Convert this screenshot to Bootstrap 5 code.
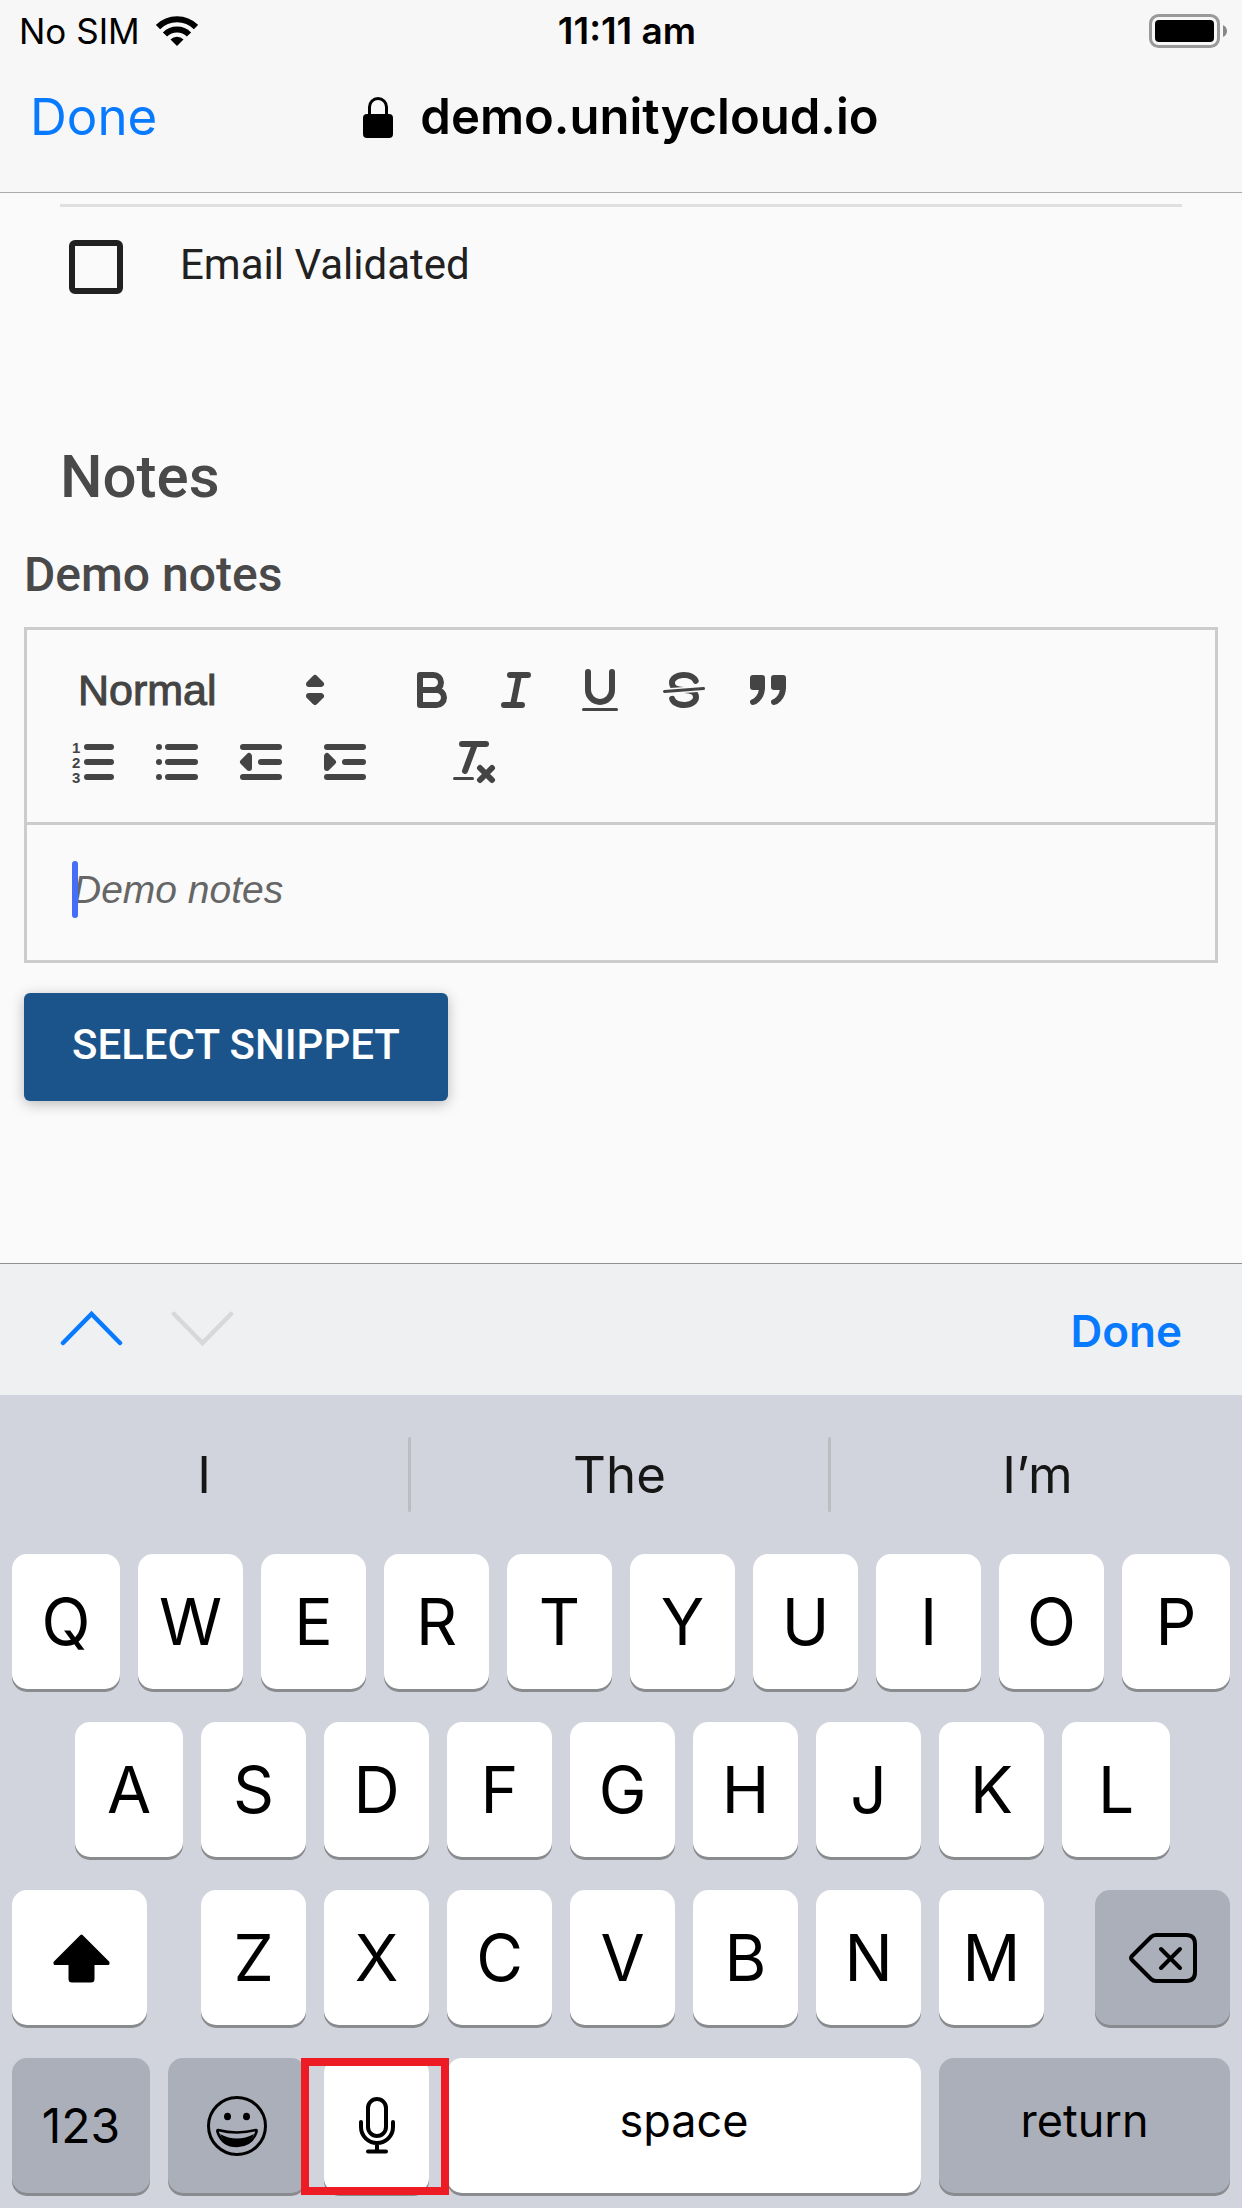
<!DOCTYPE html>
<html lang="en">
<head>
<meta charset="utf-8">
<meta name="viewport" content="width=device-width, initial-scale=1">
<title>Notes</title>
<link href="https://cdn.jsdelivr.net/npm/bootstrap@5.3.0/dist/css/bootstrap.min.css" rel="stylesheet">
<style>
  body { font-family: Roboto, sans-serif; background: #fafafa; color: #212121; line-height: 1.2; }
  button { font-family: inherit; }
  svg { display: block; }
  .ui-font { font-family: Inter, sans-serif; }

  /* browser header */
  .top-bar { background: #f7f7f7; border-bottom: 1px solid #aaa; color: #000; padding-bottom: 20px; }
  .three-col { display: grid; grid-template-columns: 1fr auto 1fr; align-items: center; }
  .status-row { height: 62px; padding: 0 15px 0 19px; font-size: 35px; }
  .status-row .clock { font-size: 37px; font-weight: 600; padding-left: 8px; }
  .title-row { height: 110px; padding: 0 30px; }
  .plain-btn { background: none; border: 0; padding: 0; color: #087aff; }
  .title-row .plain-btn { font-size: 51px; }
  .site-name { font-size: 49px; font-weight: 600; line-height: 60px; }
  .lock { margin-right: 27px; }

  /* form */
  .rule { height: 3px; background: #e0e0e0; margin: 11px 60px 0; }
  .check-row { height: 120px; padding: 0 69px; gap: 57px; font-size: 42px; }
  .check-row .form-check-input { width: 54px; height: 54px; border: 6px solid #212121; border-radius: 6px; background-color: transparent; margin: 0; float: none; }
  .check-row label { padding-bottom: 4px; }
  .section-title { font-size: 60px; font-weight: 500; line-height: 72px; color: #494949; margin: 114px 60px 0; }
  .field-title { font-size: 48px; font-weight: 500; line-height: 60px; color: #494949; margin: 32px 0 22px; display: block; }
  .editor { border: 3px solid #ccc; font-family: "Liberation Sans", sans-serif; }
  .tools { border-bottom: 3px solid #ccc; padding: 24px; color: #444; }
  .tool-group { margin-right: 45px; }
  .tool-btn { width: 84px; height: 72px; padding: 9px 15px; border: 0; background: none; color: inherit; }
  .tool-btn svg, .picker svg { width: 54px; height: 54px; }
  .picker { width: 294px; height: 72px; }
  .picker select { width: 100%; height: 100%; border: 0; background: none; appearance: none; color: inherit; font-size: 43px; padding: 2px 27px 0; -webkit-text-stroke: 1px #444; }
  .picker svg { right: 3px; top: 9px; pointer-events: none; }
  .ln { fill: none; stroke: currentColor; stroke-width: 2; stroke-linecap: round; stroke-linejoin: round; }
  .thin { stroke-width: 1; }
  .solid { fill: currentColor; }
  .nums { font: bold 5px "Liberation Sans", sans-serif; fill: currentColor; }
  .note-box { display: block; width: 100%; height: 135px; border: 0; resize: none; background: none; padding: 36px 46px; font-size: 39px; line-height: 57px; overflow: hidden; }
  .note-box::placeholder { color: #666; font-style: italic; opacity: 1; }
  .caret { left: 45px; top: 36px; width: 6px; height: 57px; border-radius: 3px; background: #466df6; }
  .snippet { background: #1b548b; color: #fff; font-size: 42px; font-weight: 500; line-height: 54px; padding: 25px 48px 29px; border: 0; border-radius: 6px; box-shadow: 0 3px 14px rgba(0,0,0,.26); margin: 30px 0 120px; }

  /* keyboard */
  .accessory { background: #eff0f2; border-top: 1px solid #8f9195; height: 132px; padding: 0 60px; }
  .accessory .chevrons { padding-bottom: 4px; }
  .accessory .done { font-size: 44px; font-weight: 600; padding-top: 4px; }
  .keyboard { background: #d1d4dc; padding: 0 12px 15px; color: #000; }
  .suggest { display: grid; grid-template-columns: 396fr 3px 417fr 3px 399fr; align-items: center; height: 159px; font-size: 51px; }
  .suggest button { border: 0; background: none; color: #161616; }
  .suggest button:first-child { padding-right: 18px; }
  .suggest button:last-child { padding-left: 20px; }
  .suggest .bar { height: 75px; background: #bbbdc2; border-radius: 2px; }
  .keys { display: grid; gap: 18px; margin-bottom: 33px; }
  .keys-a { grid-template-columns: 108fr repeat(8, 105fr) 108fr; }
  .keys-b { grid-template-columns: 108fr repeat(7, 105fr) 108fr; padding: 0 60px 0 63px; }
  .keys-c { grid-template-columns: 171fr repeat(7, 105fr) 168fr; }
  .keys-d { grid-template-columns: 138fr 138fr 105fr 474fr 291fr; margin-bottom: 0; }
  .cap { height: 135px; border: 0; padding: 0; border-radius: 15px; background: #fff; color: #000; font-size: 64px; line-height: 78px; box-shadow: 0 3px 0 #898b8f; display: flex; align-items: center; justify-content: center; }
  .cap.dim { background: #abafba; }
  .shift { margin-right: 36px; padding: 2px 0 0 4px; }
  .erase { margin-left: 33px; }
  .cap.word { font-size: 45px; padding-bottom: 9px; }
  .cap.digits { font-size: 48px; }
  .marker { inset: 0 -20px -2px -23px; border: 8px solid #ed1c24; pointer-events: none; }
</style>
<script src="https://cdn.jsdelivr.net/npm/bootstrap@5.3.0/dist/js/bootstrap.bundle.min.js"></script>
</head>
<body class="d-flex flex-column min-vh-100">

<header class="top-bar ui-font">
  <div class="three-col status-row">
    <div class="d-flex align-items-center gap-3">
      <span>No SIM</span>
      <svg width="42" height="30" viewBox="0 0 42 30" aria-label="Wi-Fi">
        <g fill="none" stroke="#000" stroke-width="6">
          <path d="M2 11a27 27 0 0 1 38 0"/><path d="M9 18.500a17 17 0 0 1 24 0"/>
        </g>
        <path d="M21 30l-6.500-6.500a9.200 9.200 0 0 1 13 0z"/>
      </svg>
    </div>
    <span class="clock">11:11 am</span>
    <svg class="ms-auto" width="78" height="34" viewBox="0 0 78 34" aria-label="Battery full">
      <rect x="1.500" y="1.500" width="68" height="31" rx="8" fill="none" stroke="#999" stroke-width="3"/>
      <rect x="6" y="6" width="59" height="22" rx="4"/>
      <path d="M74 11q4 2 4 6t-4 6z" fill="#888"/>
    </svg>
  </div>
  <div class="three-col title-row">
    <button type="button" class="plain-btn text-start">Done</button>
    <div class="d-flex align-items-center">
      <svg class="lock" width="30" height="41" viewBox="0 0 30 41" aria-label="Secure">
        <path d="M6.500 19V10a8.500 8.500 0 0 1 17 0v9" fill="none" stroke="#000" stroke-width="3"/>
        <rect y="17" width="30" height="24" rx="4"/>
      </svg>
      <h1 class="site-name mb-0">demo.unitycloud.io</h1>
    </div>
  </div>
</header>

<main class="flex-grow-1">
  <div class="rule"></div>
  <div class="check-row d-flex align-items-center">
    <input class="form-check-input" type="checkbox" id="validated">
    <label for="validated">Email Validated</label>
  </div>
  <h2 class="section-title">Notes</h2>
  <div class="px-4">
    <label class="field-title" for="notes">Demo notes</label>
    <div class="editor">
      <div class="tools">
        <div class="d-flex">
          <div class="tool-group picker position-relative">
            <select aria-label="Text style"><option>Normal</option></select>
            <svg class="position-absolute" viewBox="0 0 18 18"><g class="ln"><path fill="currentColor" d="M7 11l2 2 2-2zM7 7l2-2 2 2z"/></g></svg>
          </div>
          <div class="tool-group d-flex">
            <button type="button" class="tool-btn" aria-label="Bold"><svg viewBox="0 0 18 18"><path class="ln" d="M5,4H9.500A2.500,2.500,0,0,1,9.500,9H5ZM5,9h5.500A2.500,2.500,0,0,1,10.500,14H5Z"/></svg></button>
            <button type="button" class="tool-btn" aria-label="Italic"><svg viewBox="0 0 18 18"><path class="ln" d="M7 4H13M5 14H11M8 14L10 4"/></svg></button>
            <button type="button" class="tool-btn" aria-label="Underline"><svg viewBox="0 0 18 18"><path class="ln" d="M5,3V9a4,4,0,0,0,8,0V3"/><rect class="solid" x="3" y="15" width="12" height="1" rx=".5"/></svg></button>
            <button type="button" class="tool-btn" aria-label="Strikethrough"><svg viewBox="0 0 18 18"><path class="ln thin" d="M15.500 8.500L2.500 9.500"/><path class="solid" d="M9.007,8C6.542,7.791,6,7.519,6,6.500,6,5.792,7.283,5,9,5c1.571,0,2.765.679,2.969,1.309a1,1,0,0,0,1.900-.617C13.356,4.106,11.354,3,9,3,6.200,3,4,4.538,4,6.500a3.200,3.200,0,0,0,.500,1.843Z"/><path class="solid" d="M8.984,10C11.457,10.208,12,10.479,12,11.500c0,.708-1.283,1.500-3,1.500-1.571,0-2.765-.679-2.969-1.309a1,1,0,1,0-1.900.617C4.644,13.894,6.646,15,9,15c2.800,0,5-1.538,5-3.500a3.200,3.200,0,0,0-.500-1.843Z"/></svg></button>
            <button type="button" class="tool-btn" aria-label="Quote"><svg viewBox="0 0 18 18"><g class="ln"><path fill="currentColor" d="M4 5h3v3H4zM11 5h3v3h-3z"/><path fill="none" d="M7,8c0,4.031-3,5-3,5M14,8c0,4.031-3,5-3,5"/></g></svg></button>
          </div>
        </div>
        <div class="d-flex">
          <div class="tool-group d-flex">
            <button type="button" class="tool-btn" aria-label="Numbered list"><svg viewBox="0 0 18 18"><path class="ln" d="M7 4H15M7 9H15M7 14H15"/><g class="nums"><text x="2" y="6">1</text><text x="2" y="11">2</text><text x="2" y="16">3</text></g></svg></button>
            <button type="button" class="tool-btn" aria-label="Bulleted list"><svg viewBox="0 0 18 18"><path class="ln" d="M6 4H15M6 9H15M6 14H15M3 4h0M3 9h0M3 14h0"/></svg></button>
            <button type="button" class="tool-btn" aria-label="Decrease indent"><svg viewBox="0 0 18 18"><path class="ln" d="M3 14H15M3 4H15M9 9H15"/><g class="ln"><path fill="currentColor" d="M5 7v4l-2-2z"/></g></svg></button>
            <button type="button" class="tool-btn" aria-label="Increase indent"><svg viewBox="0 0 18 18"><path class="ln" d="M3 14H15M3 4H15M9 9H15"/><g class="ln"><path fill="currentColor" d="M3 7v4l2-2z"/></g></svg></button>
          </div>
          <div class="tool-group d-flex">
            <button type="button" class="tool-btn" aria-label="Clear formatting"><svg viewBox="0 0 18 18"><path class="ln" d="M5 3H13M6 12L9.350 3M11 11L15 15M15 11L11 15"/><rect class="solid" x="2" y="14" width="7" height="1" rx=".5"/></svg></button>
          </div>
        </div>
      </div>
      <div class="position-relative">
        <textarea class="note-box" id="notes" placeholder="Demo notes"></textarea>
        <span class="caret position-absolute"></span>
      </div>
    </div>
    <button type="button" class="snippet">SELECT SNIPPET</button>
  </div>
</main>

<section class="ui-font">
  <div class="accessory d-flex align-items-center justify-content-between">
    <div class="chevrons d-flex gap-5">
      <button type="button" class="plain-btn" aria-label="Previous field"><svg width="63" height="36" viewBox="0 0 63 36"><path d="M3 33L31.500 4 60 33" fill="none" stroke="#087aff" stroke-width="4.500" stroke-linecap="round"/></svg></button>
      <button type="button" class="plain-btn" aria-label="Next field"><svg width="63" height="36" viewBox="0 0 63 36"><path d="M3 4L31.500 33 60 4" fill="none" stroke="#d8d8d8" stroke-width="4.500" stroke-linecap="round"/></svg></button>
    </div>
    <button type="button" class="plain-btn done">Done</button>
  </div>
  <div class="keyboard">
    <div class="suggest">
      <button type="button">I</button><span class="bar"></span>
      <button type="button">The</button><span class="bar"></span>
      <button type="button">I’m</button>
    </div>
    <div class="keys keys-a">
      <button type="button" class="cap">Q</button><button type="button" class="cap">W</button><button type="button" class="cap">E</button><button type="button" class="cap">R</button><button type="button" class="cap">T</button><button type="button" class="cap">Y</button><button type="button" class="cap">U</button><button type="button" class="cap">I</button><button type="button" class="cap">O</button><button type="button" class="cap">P</button>
    </div>
    <div class="keys keys-b">
      <button type="button" class="cap">A</button><button type="button" class="cap">S</button><button type="button" class="cap">D</button><button type="button" class="cap">F</button><button type="button" class="cap">G</button><button type="button" class="cap">H</button><button type="button" class="cap">J</button><button type="button" class="cap">K</button><button type="button" class="cap">L</button>
    </div>
    <div class="keys keys-c">
      <button type="button" class="cap shift" aria-label="Shift"><svg width="57" height="49" viewBox="0 0 57 49"><path d="M28.500 2L55 28.500V29.500H40V45q0 2-2 2H19q-2 0-2-2V29.500H2V28.500z" stroke="#000" stroke-width="3" stroke-linejoin="round"/></svg></button>
      <button type="button" class="cap">Z</button><button type="button" class="cap">X</button><button type="button" class="cap">C</button><button type="button" class="cap">V</button><button type="button" class="cap">B</button><button type="button" class="cap">N</button><button type="button" class="cap">M</button>
      <button type="button" class="cap dim erase" aria-label="Delete"><svg width="68" height="50" viewBox="0 0 68 50" fill="none" stroke="#000" stroke-width="4" stroke-linecap="round" stroke-linejoin="round"><path d="M27 2H57Q66 2 66 11V39Q66 48 57 48H27Q24 48 22 46L3 27Q1 25 3 23L22 4Q24 2 27 2Z"/><path d="M32 16L51 35M51 16L32 35"/></svg></button>
    </div>
    <div class="keys keys-d">
      <button type="button" class="cap dim digits">123</button>
      <button type="button" class="cap dim" aria-label="Emoji"><svg width="60" height="60" viewBox="0 0 60 60"><circle cx="30" cy="30" r="28.500" fill="none" stroke="#000" stroke-width="3"/><ellipse cx="20.500" cy="20.500" rx="3.500" ry="3.800"/><ellipse cx="39.500" cy="20.500" rx="3.500" ry="3.800"/><path d="M11 34Q30 39 49 34Q50 34 49.500 36C46 46 39 50 30 50S14 46 10.500 36Q10 34 11 34Z" fill="none" stroke="#000" stroke-width="2.500"/><path d="M13 38Q30 47 47 38C44 46 38 50 30 50S16 46 13 38Z"/></svg></button>
      <div class="position-relative">
        <button type="button" class="cap w-100" aria-label="Dictate"><svg width="36" height="57" viewBox="0 0 36 57" fill="none" stroke="#000" stroke-width="4" stroke-linecap="round"><rect x="9" y="2" width="18" height="37" rx="9"/><path d="M2 25v5a16 16 0 0 0 32 0V25M18 46v8M9 54.500H27"/></svg></button>
        <span class="marker position-absolute"></span>
      </div>
      <button type="button" class="cap word">space</button>
      <button type="button" class="cap dim word">return</button>
    </div>
  </div>
</section>
</body>
</html>
